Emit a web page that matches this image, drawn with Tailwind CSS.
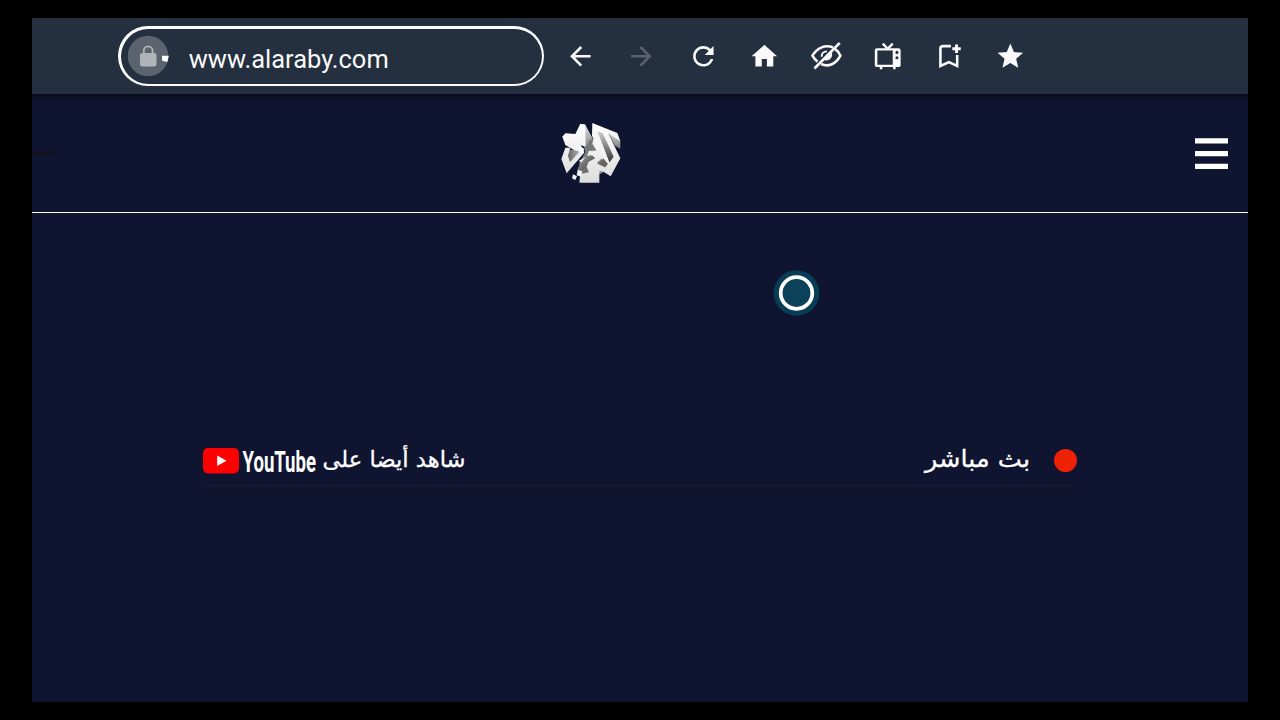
<!DOCTYPE html>
<html lang="ar">
<head>
<meta charset="utf-8">
<title>www.alaraby.com</title>
<script src="https://cdn.jsdelivr.net/npm/@tailwindcss/browser@4"></script>
</head>
<body class="h-[720px] w-[1280px] overflow-hidden bg-black px-8 py-[18px]">
<div class="flex h-[684px] flex-col bg-[#0f1430]">
  <header class="flex h-[76px] shrink-0 items-center bg-[#242f3f] pl-[86px]">
    <div class="flex h-[60px] w-[426px] items-center rounded-full bg-white p-[2.500px]">
     <div class="flex h-[55px] w-[421px] items-center rounded-full bg-[#242f3f] pl-[7.5px]">
      <svg class="h-[42px] w-[42px] shrink-0" viewBox="0 0 42 42">
        <circle cx="20" cy="21" r="20.3" fill="#5b636e"/>
        <rect x="12" y="18" width="16.500" height="13.500" rx="2.500" fill="#b0b4b9"/>
        <path d="M15.800 19v-3.300a4.400 4.400 0 0 1 8.800 0V19" fill="none" stroke="#b0b4b9" stroke-width="1.800"/>
        <path d="M34 20.700h6.800l-1.400 6.300-5.200-1.200z" fill="#fff"/>
      </svg>
      <svg class="h-[50px] w-[240px] shrink-0 overflow-visible" viewBox="0 0 240 50">
        <text x="18.700" y="37" font-family="Roboto, sans-serif" font-size="26" fill="#fafafa" textLength="200" lengthAdjust="spacingAndGlyphs">www.alaraby.com</text>
      </svg>
     </div>
    </div>
    <nav class="ml-[21px] flex items-center gap-[30.7px] text-[#fafafa]">
      <svg class="h-[30.7px] w-[30.7px]" viewBox="0 0 24 24" fill="currentColor"><path d="M20 11H7.830l5.590-5.590L12 4l-8 8 8 8 1.410-1.410L7.830 13H20z"/></svg>
      <svg class="h-[30.7px] w-[30.7px] text-[#59626e]" viewBox="0 0 24 24" fill="currentColor"><path d="M12 4l-1.410 1.410L16.170 11H4v2h12.170l-5.580 5.590L12 20l8-8z"/></svg>
      <svg class="h-[30.7px] w-[30.7px]" viewBox="0 0 24 24" fill="currentColor"><path d="M17.650 6.350C16.200 4.900 14.210 4 12 4c-4.420 0-7.990 3.580-7.990 8s3.570 8 7.990 8c3.730 0 6.840-2.550 7.730-6h-2.080c-.82 2.330-3.040 4-5.650 4-3.310 0-6-2.690-6-6s2.690-6 6-6c1.660 0 3.140.69 4.220 1.780L13 11h7V4z"/></svg>
      <svg class="h-[30.7px] w-[30.7px]" viewBox="0 0 24 24" fill="currentColor"><path d="M10 20v-6h4v6h5v-8h3L12 3 2 12h3v8z"/></svg>
      <svg class="h-[30.7px] w-[30.7px] overflow-visible" viewBox="0 0 24 24" fill="none" stroke="currentColor">
        <path d="M17.300 5C10.500 2.600 4.500 5.600 1.100 11.500c1.100 1.900 2.400 3.500 4 4.600M18.900 6.400c1.700 1.100 3.100 2.900 4.100 5.100-3.400 6.500-9.400 9.200-15 6.500" stroke-width="2"/>
        <path d="M8.300 12.300c0-2.300 1.500-4.200 4.200-4.200" stroke-width="1.500"/>
        <path d="M16 8.600c2 4-1.800 7.600-6.100 6.300z" fill="currentColor" stroke="none"/>
        <path d="M2.700 21.500L22.500 1.500" stroke-width="2.100"/>
      </svg>
      <svg class="h-[30.7px] w-[30.7px] overflow-visible" viewBox="0 0 24 24" fill="currentColor">
        <path fill-rule="evenodd" d="M3.900 5.700h16.800c1 0 1.700.7 1.700 1.600v11.400c0 1-.7 1.700-1.700 1.700H3.900c-1 0-1.700-.7-1.700-1.700V7.300c0-.9.700-1.600 1.700-1.600zM4.200 7.400v11.200h12V7.400zM19.500 7.700a1.200 1.200 0 1 0 0 2.400 1.200 1.200 0 0 0 0-2.400zm0 4.200a1.200 1.200 0 1 0 0 2.400 1.200 1.200 0 0 0 0-2.400z"/>
        <path d="M6.100 20h2v2.100h-2zM16.500 20h2v2.100h-2z"/>
        <path d="M8.400 2.100l3.900 4 3.900-4" fill="none" stroke="currentColor" stroke-width="1.900"/>
      </svg>
      <svg class="h-[30.7px] w-[30.7px] overflow-visible" viewBox="0 0 24 24">
        <path d="M14 4H7.900C6.500 4 5.800 4.700 5.800 6.100v13.400l6.700-3 6.400 3v-8.600" fill="none" stroke="currentColor" stroke-width="2"/>
        <path d="M18.400 2.800v6.500M15.100 6h6.600" fill="none" stroke="currentColor" stroke-width="2.300"/>
      </svg>
      <svg class="h-[30.7px] w-[30.7px]" viewBox="0 0 24 24" fill="currentColor"><path d="M12 17.270L18.180 21l-1.640-7.030L22 9.240l-7.190-.61L12 2 9.190 8.630 2 9.240l5.460 4.730L5.820 21z"/></svg>
    </nav>
  </header>
  <div class="h-2 shrink-0 bg-linear-to-b from-[#0a0d20] to-[#0f1430]"></div>
  <div class="flex h-[111px] shrink-0 items-start border-b border-white pr-5">
    <div class="mt-[50px] h-[2px] w-[25px] bg-[#131416]"></div>
    <svg class="mt-[13px] mr-auto ml-[493px] h-[76px] w-[80px]" viewBox="0 0 240 228" role="img">
      <defs>
        <linearGradient id="face" gradientUnits="userSpaceOnUse" x1="0" y1="25" x2="0" y2="205"><stop offset="0" stop-color="#fff"/><stop offset="1" stop-color="#dcdcdc"/></linearGradient>
        <linearGradient id="side" x1="0" y1="0" x2="0" y2="1"><stop offset="0" stop-color="#e0e0e0"/><stop offset="1" stop-color="#777"/></linearGradient>
        <linearGradient id="hole" x1="0" y1="0" x2="1" y2="0"><stop offset="0" stop-color="#555"/><stop offset="1" stop-color="#ccc"/></linearGradient>
        <linearGradient id="wedge" x1="0" y1="0" x2="0" y2="1"><stop offset="0" stop-color="#d0d0d0"/><stop offset="1" stop-color="#333"/></linearGradient>
        <linearGradient id="core" x1="0" y1="0" x2="1" y2="1"><stop offset="0" stop-color="#aaa"/><stop offset=".5" stop-color="#666"/><stop offset="1" stop-color="#bbb"/></linearGradient>
      </defs>
      <path d="M105 30l22 38 14 0 40 75-24 30-42 22-22-18-6-30 18-35-4-30z" fill="url(#core)"/>
      <path d="M105 28l20 38-2 42-18-5z" fill="url(#side)"/>
      <path d="M46 104h56l-44 48z" fill="url(#hole)"/>
      <path d="M122 72l30 36-32 0-15-8z" fill="#777"/>
      <path d="M37 65l9-10 30 2 15-31 15 3 1 64-12-4-4-21-13 3 24 43-52 61-16-43 12-34 15 0-7 24 6 20 28-31-25-20z" fill="url(#face)"/>
      <path d="M37 65l40-8 16 33 8 20-25-3-30-17z" fill="url(#face)"/>
      <path d="M77 65l14-38 14 2 0 66-20-8z" fill="url(#face)"/>
      <path d="M172 48l39 29v25l-16-10z" fill="url(#side)"/>
      <path d="M127 24l75 30 9 25-36-24 36 75-29 54-39-24 20-7 14-13-51-77z" fill="url(#face)"/>
      <path d="M141 49l17 5 33 71-14 19z" fill="url(#wedge)"/>
      <path d="M135 54l8-3 36 93-9 13-43-71z" fill="#f4f4f4"/>
      <path d="M160 130l14 17-12 15-22-9z" fill="#666"/>
      <path d="M116 108l34-2 10 20-19 17 7 18v42H88l3-26 26-5-10-22-21-12 25-15z" fill="url(#face)"/>
      <path d="M108 123l18-2 10 9-20 10-13 31-17 6-3-17z" fill="url(#core)"/>
      <path d="M139 145l36 16-6 10-23-4z" fill="url(#face)"/>
      <path d="M87 97l14 2 1 15-14-2z" fill="#fff"/>
      <path d="M83 164l14 5-4 16-13-4zM69 178l12 6-5 11-10-5z" fill="#f2f2f2"/>
    </svg>
    <svg class="mt-[36px] h-[32px] w-[33px]" viewBox="0 0 33 32" fill="#fff"><path d="M0 .3h33v5.300H0zM0 13h33v5.200H0zM0 25.700h33V31H0z"/></svg>
  </div>
  <main class="relative flex-1">
    <svg class="absolute top-[56px] left-[741px] h-[48px] w-[48px]" viewBox="0 0 48 48">
      <circle cx="23.500" cy="24" r="22.800" fill="#083d55"/>
      <circle cx="23.500" cy="24" r="15.800" fill="#0b4159" stroke="#fff" stroke-width="3.700"/>
    </svg>
    <section class="mt-[227px] mr-[170px] ml-[171px] flex h-[46px] items-start justify-between border-b border-[#1e1829]">
      <svg class="h-[45px] w-[270px]" viewBox="0 0 270 45">
        <rect x="0" y="8" width="36" height="25.500" rx="5" fill="#f00"/>
        <path d="M14.200 15.500v10.600l9.300-5.300z" fill="#fff"/>
        <text x="39.500" y="31.500" font-family="Roboto, sans-serif" font-weight="700" font-size="30" fill="#fff" textLength="73.500" lengthAdjust="spacingAndGlyphs">YouTube</text>
        <text x="262.500" y="27" direction="rtl" font-family="'DejaVu Sans', sans-serif" font-size="22" fill="#fff" stroke="#fff" stroke-width=".3" textLength="143" lengthAdjust="spacingAndGlyphs">شاهد أيضا على</text>
      </svg>
      <svg class="h-[45px] w-[160px]" viewBox="0 0 160 45">
        <text x="112" y="27" direction="rtl" font-family="'DejaVu Sans', sans-serif" font-size="24" fill="#fff" stroke="#fff" stroke-width=".3" textLength="105" lengthAdjust="spacingAndGlyphs">بث مباشر</text>
        <circle cx="147.500" cy="20.500" r="11.500" fill="#ec2106"/>
      </svg>
    </section>
  </main>
</div>
</body>
</html>
